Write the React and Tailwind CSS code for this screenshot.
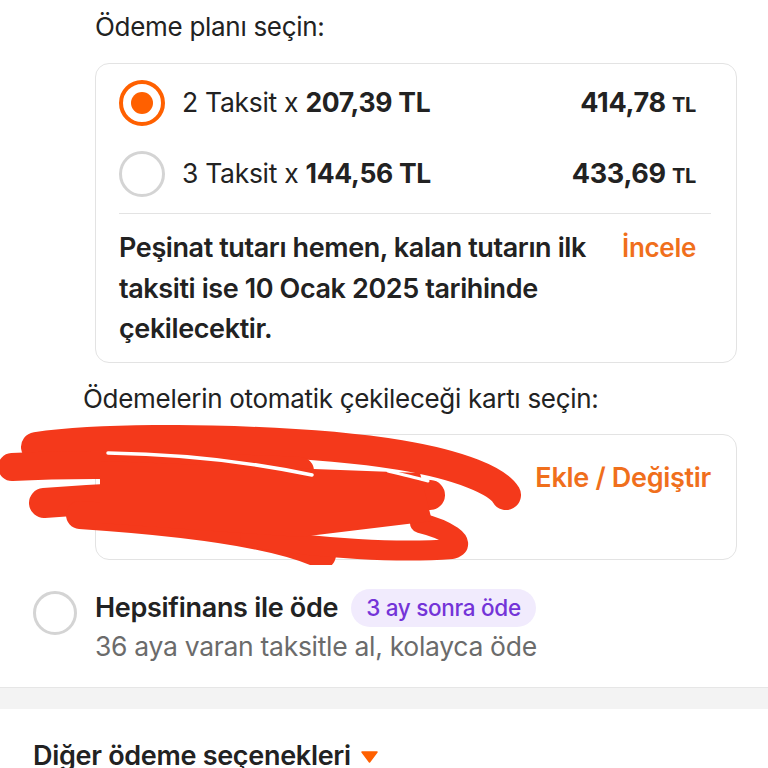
import React from "react";

const plans = [
  { count: 2, each: "207,39", total: "414,78", selected: true },
  { count: 3, each: "144,56", total: "433,69", selected: false },
];

function Radio({ selected, size = "w-[46px] h-[46px]" }) {
  return selected ? (
    <div className={`${size} shrink-0 rounded-full border-[4px] border-[#ff6000] flex items-center justify-center`}>
      <div className="w-[22px] h-[22px] rounded-full bg-[#ff6000]" />
    </div>
  ) : (
    <div className={`${size} shrink-0 rounded-full border-[3px] border-[#d4d4d4]`} />
  );
}

export default function App() {
  return (
    <div className="relative w-[768px] h-[768px] overflow-hidden bg-white text-[#222] font-['Inter',sans-serif]">
      {/* Ödeme planı */}
      <div className="pl-[95px] pr-[31px]">
        <p className="pt-[11px] text-[26px] leading-[32px] tracking-[-0.3px]">Ödeme planı seçin:</p>
        <div className="mt-[20px] rounded-[14px] border border-[#e3e3e3] pl-[23px] pr-[25px] pt-[16px] pb-[12px]">
          <div className="flex flex-col gap-[25px]">
            {plans.map((p) => (
              <div key={p.count} className="flex items-center pr-[15px]">
                <Radio selected={p.selected} />
                <span className="ml-[17px] text-[26.5px] tracking-[-0.3px]">
                  {p.count} Taksit x <span className="font-bold">{p.each} TL</span>
                </span>
                <span className="ml-auto text-[27px] font-bold tracking-[-0.3px]">
                  {p.total} <span className="text-[20px]">TL</span>
                </span>
              </div>
            ))}
          </div>
          <div className="mt-[16px] h-px bg-[#e3e3e3]" />
          <div className="mt-[14px] flex items-start pr-[15px]">
            <p className="w-[490px] text-[27px] leading-[40.5px] font-semibold tracking-[-0.4px]">
              Peşinat tutarı hemen, kalan tutarın ilk taksiti ise 10 Ocak 2025 tarihinde çekilecektir.
            </p>
            <span className="ml-auto text-[26px] leading-[40.5px] font-semibold text-[#f06f1c] tracking-[-0.3px]">İncele</span>
          </div>
        </div>
      </div>

      {/* Kart seçimi */}
      <p className="mt-[20px] pl-[83px] text-[26px] leading-[32px] tracking-[-0.3px]">
        Ödemelerin otomatik çekileceği kartı seçin:
      </p>
      <div className="ml-[95px] mr-[31px] mt-[19px] h-[126px] rounded-[14px] border border-[#e3e3e3] flex items-start justify-end pt-[26px] pr-[25px]">
        <span className="text-[27px] leading-[34px] font-semibold text-[#f06f1c] tracking-[-0.3px]">Ekle / Değiştir</span>
      </div>

      {/* Hepsifinans */}
      <div className="mt-[28px] pl-[33px] flex items-start">
        <div className="mt-[3px]">
          <Radio selected={false} size="w-[44px] h-[44px]" />
        </div>
        <div className="ml-[18px]">
          <div className="flex items-center">
            <span className="text-[27px] font-semibold tracking-[-0.3px]">Hepsifinans ile öde</span>
            <span className="ml-[13px] rounded-full bg-[#f1ebfd] px-[15px] py-[2px] text-[22.5px] font-medium text-[#7434d8] tracking-[-0.3px]">
              3 ay sonra öde
            </span>
          </div>
          <p className="mt-[2px] text-[26.5px] leading-[32px] text-[#6b6b6b] tracking-[-0.3px]">
            36 aya varan taksitle al, kolayca öde
          </p>
        </div>
      </div>

      {/* Ayırıcı */}
      <div className="mt-[25px] h-[22px] bg-[#f3f3f3] border-t border-[#e6e6e6]" />

      {/* Diğer ödeme seçenekleri */}
      <div className="mt-[27px] pl-[33px] flex items-center">
        <span className="text-[27px] font-semibold tracking-[-0.3px]">Diğer ödeme seçenekleri</span>
        <svg className="ml-[10px] mt-[2px]" width="17" height="12" viewBox="0 0 17 12">
          <path d="M1 1 H16 L8.5 11 Z" fill="#ff6000" stroke="#ff6000" strokeLinejoin="round" strokeWidth="1.5" />
        </svg>
      </div>

      {/* Karalama */}
      <svg className="absolute left-0 top-[425px]" width="540" height="140" viewBox="0 0 540 140">
        <g stroke="#f4391b" fill="none" strokeLinecap="round" strokeLinejoin="round">
          <path d="M36 22 C 120 10, 300 14, 400 30 C 460 40, 498 56, 506 70" strokeWidth="30" />
          <path d="M12 42 C 100 37, 200 42, 300 46" strokeWidth="28" />
          <path d="M44 78 C 150 70, 300 64, 430 70" strokeWidth="30" />
          <path d="M80 90 C 200 98, 280 110, 322 130" strokeWidth="28" />
          <path d="M250 112 C 320 124, 400 128, 452 124 C 470 118, 445 104, 420 98" strokeWidth="20" />
        </g>
        <path d="M100 36 L 420 48 L 432 96 L 300 112 L 100 98 Z" fill="#f4391b" />
        <g stroke="#ffffff" fill="none" strokeLinecap="round">
          <path d="M108 28 C 180 29, 250 37, 312 50" strokeWidth="3.5" />
          <path d="M388 46 C 405 50, 418 53, 428 56" strokeWidth="3" />
        </g>
      </svg>
    </div>
  );
}
